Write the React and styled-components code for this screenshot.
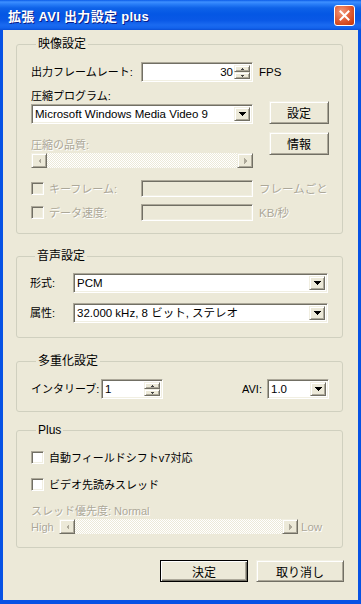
import React from 'react';
import styled, { createGlobalStyle, css } from 'styled-components';

const GlobalStyle = createGlobalStyle`
  html, body { margin: 0; padding: 0; background: #ECE9D8; }
  body {
    font-family: "Liberation Sans", "Noto Sans CJK JP", sans-serif;
    font-size: 11px;
    color: #000;
  }
  * { box-sizing: border-box; }
`;

const raised = css`
  border: 1px solid;
  border-color: #F1EFE2 #716F64 #716F64 #F1EFE2;
  box-shadow: inset 1px 1px #fff, inset -1px -1px #ACA899;
  background: #ECE9D8;
`;

const sunken = css`
  border: 1px solid;
  border-color: #ACA899 #fff #fff #ACA899;
  box-shadow: inset 1px 1px #716F64, inset -1px -1px #F1EFE2;
`;

const Window = styled.div`
  width: 361px;
  height: 604px;
  display: flex;
  flex-direction: column;
  overflow: hidden;
`;

const TitleBar = styled.div`
  height: 30px;
  flex: none;
  display: flex;
  align-items: center;
  justify-content: space-between;
  padding: 0 6px 0 8px;
  background: linear-gradient(to bottom,
    #0B5BE8 0px, #3E90FF 2px, #2A7FF8 4px, #0E62E8 8px,
    #0457E4 14px, #0958E6 20px, #1A6AF0 25px, #1363EC 28px, #0A4FD6 30px);
`;

const TitleText = styled.span`
  color: #fff;
  font-weight: bold;
  font-size: 13px;
  letter-spacing: 0.3px;
  text-shadow: 1px 1px #0A1E8A;
`;

const CloseButton = styled.div`
  width: 21px;
  height: 21px;
  border: 1px solid #fff;
  border-radius: 3px;
  background: radial-gradient(circle at 35% 30%, #F29A7C 0%, #E2623C 45%, #CF4215 80%, #C03A12 100%);
  display: flex;
  align-items: center;
  justify-content: center;
`;

const Client = styled.div`
  flex: 1;
  background: #ECE9D8;
  border-style: solid;
  border-color: #0752E4;
  border-width: 0 3px 4px 3px;
  padding: 7px 15px 0 13px;
  display: flex;
  flex-direction: column;
`;

const Group = styled.fieldset`
  margin: 0 0 ${p => p.$gap}px 0;
  padding: ${p => p.$pad};
  border: 1px solid #D0D0BF;
  border-radius: 3px;
  min-width: 0;
`;

const Legend = styled.legend`
  padding: 0 2px;
  margin-left: 5px;
  line-height: 14px;
  font-size: 12px;
`;

const Row = styled.div`
  display: flex;
  align-items: center;
  height: ${p => p.$h || 20}px;
  margin-top: ${p => p.$mt || 0}px;
`;

const Label = styled.span`
  display: inline-block;
  width: ${p => (p.$w ? `${p.$w}px` : 'auto')};
  line-height: 14px;
  white-space: nowrap;
  flex: none;
  ${p => p.$disabled && css`
    color: #ACA899;
    text-shadow: 1px 1px #fff;
  `}
`;

const Unit = styled(Label)`
  margin-left: ${p => p.$ml ?? 6}px;
  font-size: 11.5px;
`;

const Edit = styled.div`
  ${sunken};
  width: ${p => p.$w}px;
  height: ${p => p.$h || 20}px;
  background: ${p => (p.$disabled ? '#ECE9D8' : '#fff')};
  display: flex;
  align-items: stretch;
  flex: none;
  padding: 2px;
`;

const EditText = styled.div`
  flex: 1;
  display: flex;
  align-items: center;
  justify-content: ${p => (p.$right ? 'flex-end' : 'flex-start')};
  padding: 0 1px;
  font-size: 11.5px;
  line-height: 14px;
  white-space: nowrap;
  overflow: hidden;
`;

const SpinCol = styled.div`
  width: 16px;
  display: flex;
  flex-direction: column;
`;

const SpinBtn = styled.div`
  ${raised};
  flex: 1;
  display: flex;
  align-items: center;
  justify-content: center;
`;

const ComboBtn = styled.div`
  ${raised};
  width: 16px;
  display: flex;
  align-items: center;
  justify-content: center;
`;

const PushButton = styled.div`
  ${raised};
  width: ${p => p.$w}px;
  height: ${p => p.$h}px;
  margin-top: ${p => p.$mt || 0}px;
  display: flex;
  align-items: center;
  justify-content: center;
  font-size: 12px;
  flex: none;
  ${p => p.$default && css`
    border: 1px solid #000;
    box-shadow: inset 1px 1px #fff, inset -1px -1px #716F64, inset -2px -2px #ACA899;
  `}
`;

const Columns = styled.div`
  display: flex;
  gap: 16px;
  margin-top: 7px;
`;

const Col = styled.div`
  display: flex;
  flex-direction: column;
  width: ${p => p.$w}px;
  padding-top: ${p => p.$pt || 0}px;
`;

const Scroll = styled.div`
  display: flex;
  width: ${p => p.$w}px;
  height: 15px;
  margin-top: ${p => p.$mt || 0}px;
  flex: none;
`;

const ScrollBtn = styled.div`
  ${raised};
  width: 16px;
  height: 15px;
  display: flex;
  align-items: center;
  justify-content: center;
`;

const Track = styled.div`
  flex: 1;
  background-color: #ECE9D8;
  background-image: conic-gradient(#fff 25%, #ECE9D8 0 50%, #fff 0 75%, #ECE9D8 0);
  background-size: 2px 2px;
`;

const CheckWrap = styled.div`
  display: flex;
  align-items: center;
  width: ${p => (p.$w ? `${p.$w}px` : 'auto')};
  flex: none;
`;

const CheckBox = styled.div`
  ${sunken};
  width: 13px;
  height: 13px;
  margin-right: 5px;
  background: ${p => (p.$disabled ? '#ECE9D8' : '#fff')};
  flex: none;
`;

const Spacer = styled.div`flex: 1;`;

const ButtonBar = styled.div`
  display: flex;
  justify-content: flex-end;
  gap: 8px;
  margin-right: -1px;
`;

const Arrow = ({ dir = 'down', color = '#000', size = 7 }) => {
  const h = Math.ceil(size / 2);
  const pts = {
    down: `0,0 ${size},0 ${size / 2},${h}`,
    up: `0,${h} ${size},${h} ${size / 2},0`,
  };
  if (dir === 'left' || dir === 'right') {
    const p = dir === 'left' ? `${h},0 ${h},${size} 0,${size / 2}` : `0,0 0,${size} ${h},${size / 2}`;
    return (
      <svg width={h} height={size} viewBox={`0 0 ${h} ${size}`} shapeRendering="crispEdges">
        <polygon points={p} fill={color} />
      </svg>
    );
  }
  return (
    <svg width={size} height={h} viewBox={`0 0 ${size} ${h}`} shapeRendering="crispEdges">
      <polygon points={pts[dir]} fill={color} />
    </svg>
  );
};

const Combo = ({ w, text }) => (
  <Edit $w={w}>
    <EditText>{text}</EditText>
    <ComboBtn><Arrow dir="down" /></ComboBtn>
  </Edit>
);

const Spin = ({ w, text, right }) => (
  <Edit $w={w}>
    <EditText $right={right}>{text}</EditText>
    <SpinCol>
      <SpinBtn><Arrow dir="up" size={3} color="#444" /></SpinBtn>
      <SpinBtn><Arrow dir="down" size={3} color="#444" /></SpinBtn>
    </SpinCol>
  </Edit>
);

const DisabledScroll = ({ w, mt }) => (
  <Scroll $w={w} $mt={mt}>
    <ScrollBtn><Arrow dir="left" size={6} color="#ACA899" /></ScrollBtn>
    <Track />
    <ScrollBtn><Arrow dir="right" size={6} color="#ACA899" /></ScrollBtn>
  </Scroll>
);

export default function App() {
  return (
    <>
      <GlobalStyle />
      <Window>
        <TitleBar>
          <TitleText>拡張 AVI 出力設定 plus</TitleText>
          <CloseButton>
            <svg width="11" height="11" viewBox="0 0 11 11">
              <path d="M1.5 1.5 L9.5 9.5 M9.5 1.5 L1.5 9.5" stroke="#fff" strokeWidth="2" strokeLinecap="square" />
            </svg>
          </CloseButton>
        </TitleBar>
        <Client>
          <Group $gap={15} $pad="11px 0 12px 14px">
            <Legend>映像設定</Legend>
            <Row>
              <Label $w={110}>出力フレームレート:</Label>
              <Spin w={112} text="30" right />
              <Unit>FPS</Unit>
            </Row>
            <Columns>
              <Col $w={222}>
                <Label>圧縮プログラム:</Label>
                <div style={{ marginTop: 1 }}>
                  <Combo w={222} text="Microsoft Windows Media Video 9" />
                </div>
                <Label $disabled style={{ marginTop: 14 }}>圧縮の品質:</Label>
                <DisabledScroll w={222} mt={1} />
              </Col>
              <Col $w={60} $pt={12}>
                <PushButton $w={60} $h={23}>設定</PushButton>
                <PushButton $w={60} $h={23} $mt={8}>情報</PushButton>
              </Col>
            </Columns>
            <Row $h={17} $mt={12}>
              <CheckWrap $w={110}>
                <CheckBox $disabled />
                <Label $disabled>キーフレーム:</Label>
              </CheckWrap>
              <Edit $w={112} $h={17} $disabled />
              <Unit $disabled>フレームごと</Unit>
            </Row>
            <Row $h={17} $mt={7}>
              <CheckWrap $w={110}>
                <CheckBox $disabled />
                <Label $disabled>データ速度:</Label>
              </CheckWrap>
              <Edit $w={112} $h={17} $disabled />
              <Unit $disabled>KB/秒</Unit>
            </Row>
          </Group>

          <Group $gap={16} $pad="10px 0 14px 13px">
            <Legend>音声設定</Legend>
            <Row>
              <Label $w={43}>形式:</Label>
              <Combo w={255} text="PCM" />
            </Row>
            <Row $mt={10}>
              <Label $w={43}>属性:</Label>
              <Combo w={255} text="32.000 kHz, 8 ビット, ステレオ" />
            </Row>
          </Group>

          <Group $gap={11} $pad="11px 13px 12px 14px">
            <Legend>多重化設定</Legend>
            <Row>
              <Label $w={70}>インタリーブ:</Label>
              <Spin w={62} text="1" />
              <Spacer />
              <Label style={{ marginRight: 5 }}>AVI:</Label>
              <Combo w={62} text="1.0" />
            </Row>
          </Group>

          <Group $gap={12} $pad="12px 0 13px 14px">
            <Legend>Plus</Legend>
            <Row $h={17}>
              <CheckWrap>
                <CheckBox />
                <Label>自動フィールドシフトv7対応</Label>
              </CheckWrap>
            </Row>
            <Row $h={17} $mt={10}>
              <CheckWrap>
                <CheckBox />
                <Label>ビデオ先読みスレッド</Label>
              </CheckWrap>
            </Row>
            <Row $h={14} $mt={11}>
              <Label $disabled>スレッド優先度: Normal</Label>
            </Row>
            <Row $h={15} $mt={1}>
              <Label $disabled $w={28}>High</Label>
              <DisabledScroll w={239} />
              <Unit $disabled $ml={3}>Low</Unit>
            </Row>
          </Group>

          <ButtonBar>
            <PushButton $w={88} $h={22} $default>決定</PushButton>
            <PushButton $w={88} $h={22}>取り消し</PushButton>
          </ButtonBar>
        </Client>
      </Window>
    </>
  );
}
